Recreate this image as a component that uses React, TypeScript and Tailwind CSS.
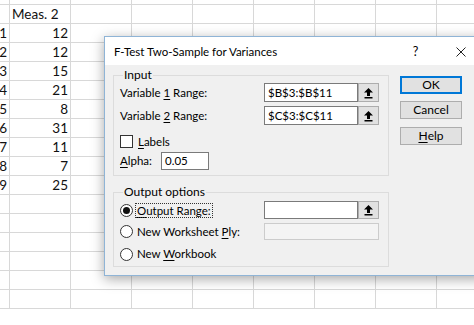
import React from "react"

const ROWS: [string, string][] = [
  ["", ""],
  ["", "Meas. 2"],
  ["1", "12"],
  ["2", "12"],
  ["3", "15"],
  ["4", "21"],
  ["5", "8"],
  ["6", "31"],
  ["7", "11"],
  ["8", "7"],
  ["9", "25"],
  ["", ""],
  ["", ""],
  ["", ""],
  ["", ""],
  ["", ""],
  ["", ""],
]

function Sheet() {
  return (
    <div className="flex flex-col font-['Lato',sans-serif] text-[13.5px] text-[#111]">
      {ROWS.map(([a, b], i) => (
        <div key={i} className={`flex ${i === 0 ? "h-[5px]" : "h-[19px]"}`}>
          <div className="w-[10px] shrink-0 overflow-hidden border-r border-b border-[#d8d8d8] flex items-center justify-end pr-[2px] pt-[1px] leading-none">
            {a}
          </div>
          <div
            className={`w-[61px] shrink-0 border-r border-b border-[#d8d8d8] flex items-center pt-[1px] leading-none whitespace-nowrap ${
              i === 1 ? "justify-start pl-[2px]" : "justify-end pr-[2px]"
            }`}
          >
            {b}
          </div>
          {[0, 1, 2, 3, 4, 5, 6].map((c) => (
            <div key={c} className="w-[61px] shrink-0 border-r border-b border-[#d8d8d8]" />
          ))}
        </div>
      ))}
    </div>
  )
}

function U({ children }: { children: React.ReactNode }) {
  return <span className="underline underline-offset-2">{children}</span>
}

function RefButton() {
  return (
    <div className="w-[21px] h-full shrink-0 bg-[#e1e1e1] border border-[#adadad] flex items-center justify-center">
      <svg width="11" height="12" viewBox="0 0 11 12">
        <path d="M5.5 1 L10 5.5 L7 5.5 L7 9 L4 9 L4 5.5 L1 5.5 Z" fill="#000" />
        <rect x="1.5" y="10" width="8" height="1.5" fill="#000" />
      </svg>
    </div>
  )
}

function TextBox({ value, w = "w-[94px]", disabled = false }: { value?: string; w?: string; disabled?: boolean }) {
  return (
    <div
      className={`${w} h-full shrink-0 border ${
        disabled ? "border-[#cccccc] bg-[#f4f4f4]" : "border-[#7a7a7a] bg-white"
      } flex items-center pl-[3px]`}
    >
      {value}
    </div>
  )
}

function Radio({ checked = false }: { checked?: boolean }) {
  return (
    <div className="w-[13px] h-[13px] rounded-full border border-[#333] bg-white flex items-center justify-center shrink-0">
      {checked && <div className="w-[7px] h-[7px] rounded-full bg-[#111]" />}
    </div>
  )
}

function Btn({ children, focus = false }: { children: React.ReactNode; focus?: boolean }) {
  return (
    <div
      className={`w-[62px] h-[18px] flex items-center justify-center bg-[#e1e1e1] border ${
        focus ? "border-[#0078d7] shadow-[inset_0_0_0_1px_#0078d7]" : "border-[#adadad]"
      }`}
    >
      {children}
    </div>
  )
}

function Dialog() {
  return (
    <div className="absolute left-[104px] top-[36px] w-[380px] h-[240px] border border-[#8fb4d6] bg-[#f0f0f0] shadow-[0_3px_12px_rgba(0,0,0,0.35)] flex flex-col font-['Lato',sans-serif] text-[11.5px] text-black">
      {/* title bar */}
      <div className="h-[28px] bg-white flex items-center pl-[9px] pt-[2px] shrink-0">
        <span className="flex-1 text-[11.5px]">F-Test Two-Sample for Variances</span>
        <div className="w-[45px] flex justify-center text-[12.5px]">?</div>
        <div className="w-[45px] flex justify-center">
          <svg width="10" height="10" viewBox="0 0 10 10">
            <path d="M0.5 0.5 L9.5 9.5 M9.5 0.5 L0.5 9.5" stroke="#222" strokeWidth="1" />
          </svg>
        </div>
      </div>

      {/* body */}
      <div className="flex pt-[2px] pl-[8px]">
        <div className="w-[276px] shrink-0 flex flex-col">
          <fieldset className="border border-[#dcdcdc] pl-[6px] pb-[5px]">
            <legend className="ml-[3px] px-[1px] leading-[16px] text-[12px]">Input</legend>
            <div className="flex items-center h-[19px]">
              <div className="w-[144px]">
                Variable <U>1</U> Range:
              </div>
              <TextBox value="$B$3:$B$11" />
              <RefButton />
            </div>
            <div className="flex items-center h-[19px] mt-[4px]">
              <div className="w-[144px]">
                Variable <U>2</U> Range:
              </div>
              <TextBox value="$C$3:$C$11" />
              <RefButton />
            </div>
            <div className="flex items-center h-[13px] mt-[10px] gap-[5px]">
              <div className="w-[13px] h-[13px] border border-[#333] bg-white" />
              <span>
                <U>L</U>abels
              </span>
            </div>
            <div className="flex items-center h-[18px] mt-[4px]">
              <div className="w-[41px]">
                <U>A</U>lpha:
              </div>
              <TextBox value="0.05" w="w-[48px]" />
            </div>
          </fieldset>

          <fieldset className="border border-[#dcdcdc] pl-[6px] pb-[3px] mt-[8px]">
            <legend className="ml-[3px] px-[1px] leading-[16px] text-[12px]">Output options</legend>
            <div className="flex items-center h-[18px] mt-[1px]">
              <div className="w-[144px] flex items-center gap-[3px]">
                <Radio checked />
                <span className="outline outline-1 outline-dotted outline-[#333] px-[1px] leading-[13px]">
                  <U>O</U>utput Range:
                </span>
              </div>
              <TextBox w="w-[94px]" />
              <RefButton />
            </div>
            <div className="flex items-center h-[17px] mt-[4px]">
              <div className="w-[144px] flex items-center gap-[4px]">
                <Radio />
                <span>
                  New Worksheet <U>P</U>ly:
                </span>
              </div>
              <TextBox w="w-[115px]" disabled />
            </div>
            <div className="flex items-center h-[18px] mt-[5px] gap-[4px]">
              <Radio />
              <span>
                New <U>W</U>orkbook
              </span>
            </div>
          </fieldset>
        </div>

        <div className="flex flex-col ml-[11px] mt-[9px] text-[12px]">
          <Btn focus>OK</Btn>
          <div className="mt-[7px]">
            <Btn>Cancel</Btn>
          </div>
          <div className="mt-[8px]">
            <Btn>
              <U>H</U>elp
            </Btn>
          </div>
        </div>
      </div>
    </div>
  )
}

export default function App() {
  return (
    <div className="relative w-[474px] h-[325px] overflow-hidden bg-white">
      <Sheet />
      <Dialog />
    </div>
  )
}
